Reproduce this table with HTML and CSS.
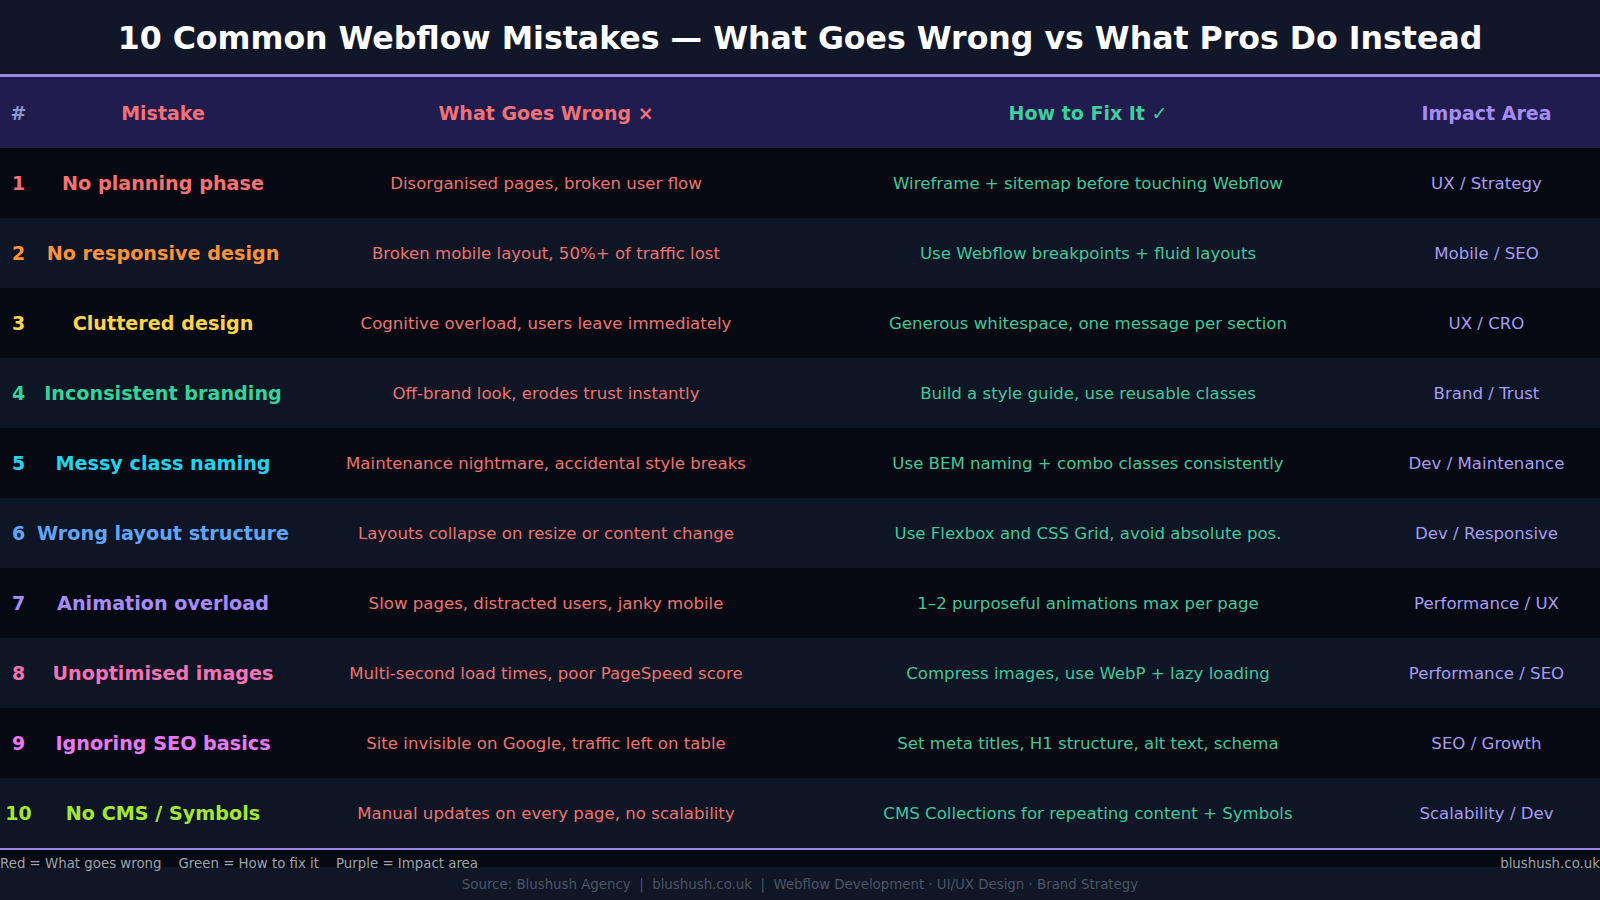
FILE: index.html
```html
<!DOCTYPE html>
<html lang="en">
<head>
<meta charset="utf-8">
<title>10 Common Webflow Mistakes</title>
<link rel="stylesheet" href="styles.css">
</head>
<body>
<header class="title-bar">
  <h1 class="title">10 Common Webflow Mistakes — What Goes Wrong vs What Pros Do Instead</h1>
</header>
<div class="table">
  <div class="row head">
    <div class="cell num-h">#</div>
    <div class="cell h-red">Mistake</div>
    <div class="cell h-red">What Goes Wrong ×</div>
    <div class="cell h-green">How to Fix It ✓</div>
    <div class="cell h-purple">Impact Area</div>
  </div>
  <div class="row odd c1">
    <div class="cell num">1</div><div class="cell mistake">No planning phase</div>
    <div class="cell wrong">Disorganised pages, broken user flow</div>
    <div class="cell fix">Wireframe + sitemap before touching Webflow</div>
    <div class="cell impact">UX / Strategy</div>
  </div>
  <div class="row even c2">
    <div class="cell num">2</div><div class="cell mistake">No responsive design</div>
    <div class="cell wrong">Broken mobile layout, 50%+ of traffic lost</div>
    <div class="cell fix">Use Webflow breakpoints + fluid layouts</div>
    <div class="cell impact">Mobile / SEO</div>
  </div>
  <div class="row odd c3">
    <div class="cell num">3</div><div class="cell mistake">Cluttered design</div>
    <div class="cell wrong">Cognitive overload, users leave immediately</div>
    <div class="cell fix">Generous whitespace, one message per section</div>
    <div class="cell impact">UX / CRO</div>
  </div>
  <div class="row even c4">
    <div class="cell num">4</div><div class="cell mistake">Inconsistent branding</div>
    <div class="cell wrong">Off-brand look, erodes trust instantly</div>
    <div class="cell fix">Build a style guide, use reusable classes</div>
    <div class="cell impact">Brand / Trust</div>
  </div>
  <div class="row odd c5">
    <div class="cell num">5</div><div class="cell mistake">Messy class naming</div>
    <div class="cell wrong">Maintenance nightmare, accidental style breaks</div>
    <div class="cell fix">Use BEM naming + combo classes consistently</div>
    <div class="cell impact">Dev / Maintenance</div>
  </div>
  <div class="row even c6">
    <div class="cell num">6</div><div class="cell mistake">Wrong layout structure</div>
    <div class="cell wrong">Layouts collapse on resize or content change</div>
    <div class="cell fix">Use Flexbox and CSS Grid, avoid absolute pos.</div>
    <div class="cell impact">Dev / Responsive</div>
  </div>
  <div class="row odd c7">
    <div class="cell num">7</div><div class="cell mistake">Animation overload</div>
    <div class="cell wrong">Slow pages, distracted users, janky mobile</div>
    <div class="cell fix">1–2 purposeful animations max per page</div>
    <div class="cell impact">Performance / UX</div>
  </div>
  <div class="row even c8">
    <div class="cell num">8</div><div class="cell mistake">Unoptimised images</div>
    <div class="cell wrong">Multi-second load times, poor PageSpeed score</div>
    <div class="cell fix">Compress images, use WebP + lazy loading</div>
    <div class="cell impact">Performance / SEO</div>
  </div>
  <div class="row odd c9">
    <div class="cell num">9</div><div class="cell mistake">Ignoring SEO basics</div>
    <div class="cell wrong">Site invisible on Google, traffic left on table</div>
    <div class="cell fix">Set meta titles, H1 structure, alt text, schema</div>
    <div class="cell impact">SEO / Growth</div>
  </div>
  <div class="row even c10">
    <div class="cell num">10</div><div class="cell mistake">No CMS / Symbols</div>
    <div class="cell wrong">Manual updates on every page, no scalability</div>
    <div class="cell fix">CMS Collections for repeating content + Symbols</div>
    <div class="cell impact">Scalability / Dev</div>
  </div>
</div>
<footer class="footer">
  <div class="legend-row">
    <span class="legend">Red = What goes wrong&nbsp;&nbsp;&nbsp; Green = How to fix it&nbsp;&nbsp;&nbsp; Purple = Impact area</span>
    <span class="site">blushush.co.uk</span>
  </div>
  <div class="source">Source: Blushush Agency&nbsp; | &nbsp;blushush.co.uk&nbsp; | &nbsp;Webflow Development · UI/UX Design · Brand Strategy</div>
</footer>
</body>
</html>
```
FILE: styles.css
```css
* { box-sizing: border-box; }
html, body { margin: 0; padding: 0; }
body {
  width: 1600px;
  height: 900px;
  overflow: hidden;
  background: #0f1626;
  font-family: "DejaVu Sans", "Liberation Sans", sans-serif;
}
.title-bar {
  height: 72px;
  padding-top: 2px;
  box-sizing: content-box;
  background: #111729;
  display: flex;
  align-items: center;
  justify-content: center;
  border-bottom: 3px solid #9d86e0;
}
.title {
  margin: 0;
  color: #ffffff;
  font-size: 31.6px;
  font-weight: bold;
}
.table {
  display: flex;
  flex-direction: column;
  border-bottom: 2px solid #9d86e0;
}
.row {
  display: grid;
  grid-template-columns: 37px 252px 514px 570px 227px;
  height: 70px;
  align-items: center;
  text-align: center;
}
.row.head {
  height: 71px;
  background: #201c4e;
  font-weight: bold;
  font-size: 19px;
}
.row.odd { background: #070912; }
.row.even { background: #0e1524; }
.cell { white-space: nowrap; }
.num-h { color: #8e98cf; }
.h-red { color: #f07178; }
.h-green { color: #3ecf9c; }
.h-purple { color: #a58cf2; }
.num { font-weight: bold; font-size: 19px; }
.mistake { font-weight: bold; font-size: 19.2px; }
.wrong { color: #ec7470; font-size: 16.6px; }
.fix { color: #40c79c; font-size: 16.6px; }
.impact { color: #a79cf2; font-size: 16.6px; }
.c1 .num, .c1 .mistake { color: #f87171; }
.c2 .num, .c2 .mistake { color: #fb923c; }
.c3 .num, .c3 .mistake { color: #fcd34d; }
.c4 .num, .c4 .mistake { color: #34d399; }
.c5 .num, .c5 .mistake { color: #22d3ee; }
.c6 .num, .c6 .mistake { color: #60a5fa; }
.c7 .num, .c7 .mistake { color: #a78bfa; }
.c8 .num, .c8 .mistake { color: #f472b6; }
.c9 .num, .c9 .mistake { color: #e879f9; }
.c10 .num, .c10 .mistake { color: #a3e635; }
.footer {
  height: 50px;
  background: linear-gradient(#070a12 0, #070a12 17px, #0f1626 17px);
  display: flex;
  flex-direction: column;
}
.legend-row {
  height: 23px;
  padding-top: 3px;
  display: flex;
  justify-content: space-between;
  align-items: center;
  font-size: 13.35px;
  color: #9ca3af;
}
.source {
  height: 22px;
  display: flex;
  align-items: center;
  justify-content: center;
  font-size: 13.35px;
  color: #4b5563;
}
```
